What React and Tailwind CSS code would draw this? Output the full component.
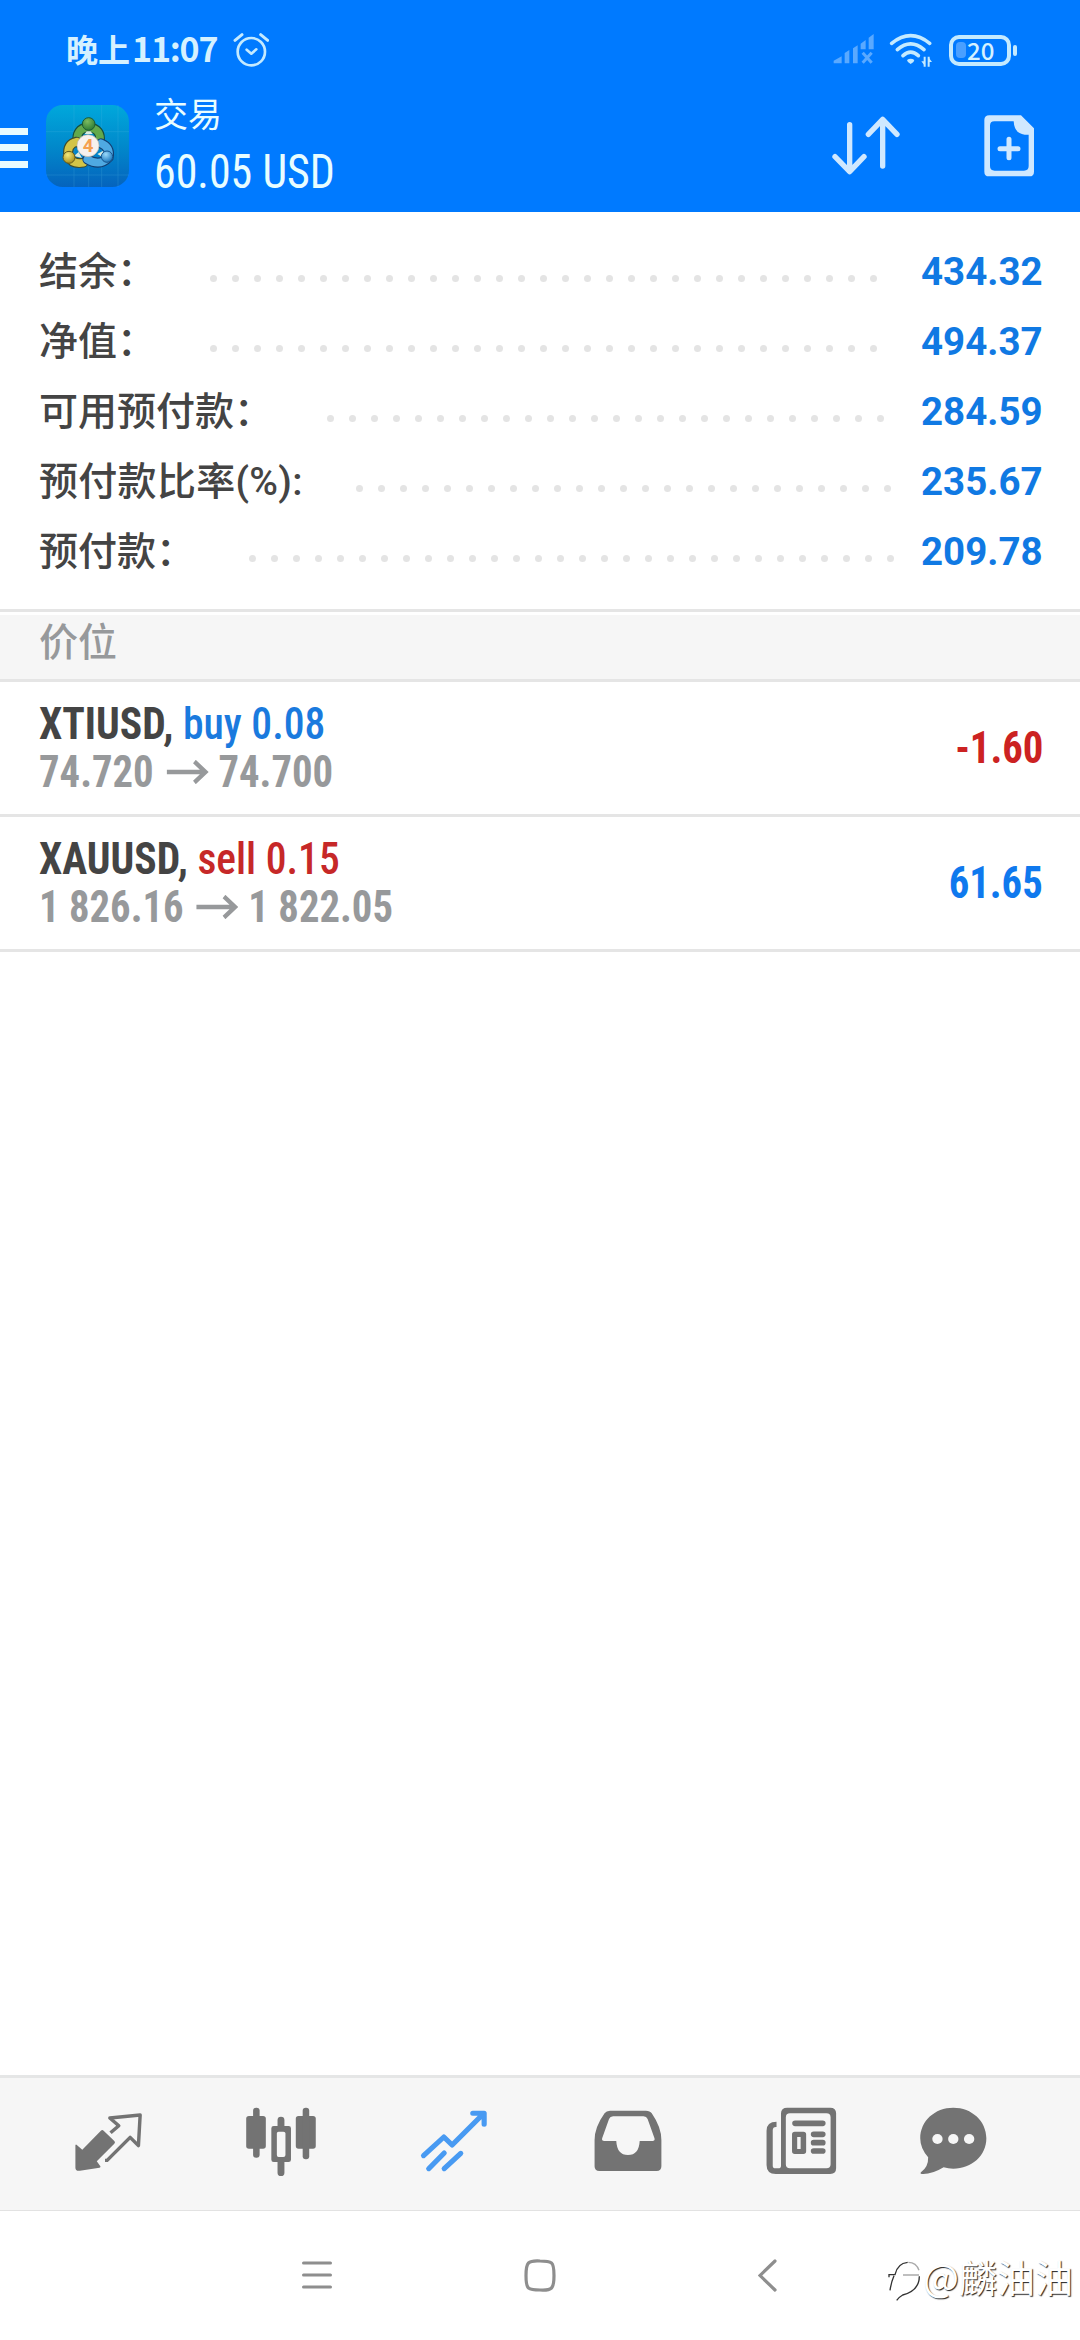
import React from "react";

const account = [
  { label: "结余：", value: "434.32" },
  { label: "净值：", value: "494.37" },
  { label: "可用预付款：", value: "284.59" },
  { label: "预付款比率(%):", value: "235.67", spacing: "tracking-[0.3px]" },
  { label: "预付款：", value: "209.78" },
];

const positions = [
  { symbol: "XTIUSD", side: "buy", volume: "0.08", open: "74.720", current: "74.700", profit: "-1.60" },
  { symbol: "XAUUSD", side: "sell", volume: "0.15", open: "1 826.16", current: "1 822.05", profit: "61.65" },
];

const StatusBar = () => (
  <div className="flex h-[100px] items-center pl-[66px] pr-[63px] text-[#d5f1ff]">
    <div className="flex w-[151px] items-center whitespace-nowrap pb-[5px] font-['Noto_Sans_CJK_SC',sans-serif] leading-none">
      <span className="text-[32px] font-bold">晚上</span>
      <span className="ml-0.5 text-[34px] font-bold tracking-[-1.2px]">11:07</span>
    </div>
    {/* alarm */}
    <svg className="ml-[16px]" width="36" height="36" viewBox="698 97 108 108" fill="none" stroke="#c4eaff" strokeLinecap="round">
      <circle cx="753" cy="156" r="41" strokeWidth="8" />
      <path d="M739 150l14 12 15-13" strokeWidth="8" strokeLinejoin="round" />
      <path d="M704 122l21-17M802 122l-21-17" strokeWidth="9" />
    </svg>
    <div className="ml-auto flex items-center">
      {/* no signal */}
      <svg width="42" height="32" viewBox="160 100 126 96" fill="#5aa9ff">
        <path d="M162 188v-8l24-13v21zM195 188v-31l14-9v40zM220 188v-45l14-9v54zM243 146v-17l15-11v28zM267 146v-35l15-11v46z" />
        <path d="M249 156l27 30M276 156l-27 30" stroke="#5aa9ff" strokeWidth="9" />
      </svg>
      <svg className="ml-[14px] mt-0.5" width="44" height="36" viewBox="328 99 132 108" fill="none" stroke="#c4eaff" strokeWidth="11" strokeLinecap="round">
        <path d="M336 130Q393 84 450 130" />
        <path d="M353 149Q393 114 433 149" />
        <path d="M370 167Q393 146 416 167" />
        <path d="M382 180Q393 172 404 180Q404 186 393 192Q382 186 382 180z" fill="#c4eaff" stroke="none" />
        <path d="M435 170v30M447 200v-30" strokeWidth="6" strokeLinecap="butt" />
        <path d="M425 184h9v12zM457 186h-9v-12z" fill="#c4eaff" stroke="none" />
      </svg>
      <div className="ml-4 flex items-center">
        <div className="flex h-[31px] w-[62px] items-center rounded-[10px] border-4 border-[#c4eaff] pl-[3px]">
          <span className="h-4 w-[10px] rounded-sm bg-[#4aa0ff]" />
          <span className="ml-px pb-px font-['Noto_Sans_CJK_SC',sans-serif] text-[24px] font-medium leading-none">20</span>
        </div>
        <span className="ml-0.5 h-[11px] w-1 rounded-full bg-[#c4eaff]" />
      </div>
    </div>
  </div>
);

const AppLogo = () => (
  <svg className="ml-[18px]" width="83" height="82" viewBox="138 315 249 246">
    <defs>
      <linearGradient id="tile" x1="0" y1="0" x2="0" y2="1">
        <stop offset="0" stopColor="#00a8dc" />
        <stop offset="0.5" stopColor="#0189cb" />
        <stop offset="1" stopColor="#0563bd" />
      </linearGradient>
      <radialGradient id="green" cx="0.4" cy="0.3" r="0.7">
        <stop offset="0" stopColor="#7dbb60" />
        <stop offset="1" stopColor="#2d7d35" />
      </radialGradient>
      <radialGradient id="gold" cx="0.4" cy="0.3" r="0.7">
        <stop offset="0" stopColor="#f5ea7c" />
        <stop offset="1" stopColor="#a98f1c" />
      </radialGradient>
      <radialGradient id="sky" cx="0.4" cy="0.3" r="0.7">
        <stop offset="0" stopColor="#9ad9fb" />
        <stop offset="1" stopColor="#1b78bd" />
      </radialGradient>
    </defs>
    <rect x="138" y="315" width="249" height="246" rx="50" fill="url(#tile)" />
    <path d="M138 395h249M138 525h249M222 315v246M305 315v246M354 315v246M266 500v61" stroke="#59bce4" strokeWidth="2" opacity="0.3" />
    <g fill="none" strokeLinecap="round">
      <path d="M233 428Q226 386 265 382Q306 386 299 428" stroke="#174d3b" strokeWidth="30" />
      <path d="M233 428Q226 386 265 382Q306 386 299 428" stroke="#62a94c" strokeWidth="23" />
      <path d="M230 425Q200 432 205 468Q216 494 250 488" stroke="#3f4c2e" strokeWidth="30" />
      <path d="M230 425Q200 432 205 468Q216 494 250 488" stroke="#d3c447" strokeWidth="23" />
      <path d="M303 430Q332 442 326 472Q300 500 262 478" stroke="#123f73" strokeWidth="30" />
      <path d="M303 430Q332 442 326 472Q300 500 262 478" stroke="#4fa9e2" strokeWidth="23" />
    </g>
    <path d="M254 402l6-8h12l6 8zM222 468l14-12 10 18zM292 462l18-10-2 20z" fill="#d9ebe2" />
    <circle cx="266" cy="372" r="19" fill="url(#green)" stroke="#1c5a34" strokeWidth="3" />
    <circle cx="207" cy="472" r="18" fill="url(#gold)" stroke="#645a1c" strokeWidth="3" />
    <circle cx="321" cy="470" r="17" fill="url(#sky)" stroke="#17558f" strokeWidth="3" />
    <circle cx="264" cy="437" r="33" fill="#f7f1ee" stroke="#bcb5a8" strokeWidth="2" />
    <text x="264" y="457" textAnchor="middle" fontFamily="Roboto, sans-serif" fontSize="56" fontWeight="700" fill="#f5a050">4</text>
  </svg>
);

const Header = () => (
  <header className="h-[212px] bg-[#007aff]">
    <StatusBar />
    <div className="flex h-[92px] items-center">
      <svg className="mt-[3px]" width="28" height="42" viewBox="0 0 28 42" fill="#e8fbff">
        <path d="M0 1h28v7H0zM0 17h28v7H0zM0 34h28v7H0z" />
      </svg>
      <AppLogo />
      <div className="ml-[25px] text-[#e8fdff]">
        <div className="mb-1.5 font-['Noto_Sans_CJK_SC',sans-serif] text-[34px] leading-[46px]">交易</div>
        <div className="w-[180px] origin-left scale-x-[0.915] whitespace-nowrap font-['Roboto_Condensed','Roboto',sans-serif] text-[48px] font-[450] leading-[60px]">60.05 USD</div>
      </div>
      <svg className="ml-auto" width="68" height="60" viewBox="153 348 204 180" fill="none" stroke="#cfe8ff" strokeWidth="16" strokeLinecap="round" strokeLinejoin="round">
        <path d="M206 374v140M162 470l44 45 43-45M305 498V358M262 403l43-45 43 45" />
      </svg>
      <svg className="ml-[84px] mr-[46px]" width="50" height="62" viewBox="609 345 150 186">
        <path fillRule="evenodd" fill="#cfe8ff" d="M625 346h95l39 39v130q0 14-14 14H624q-14 0-14-14V360q0-14 15-14zM640 364q-13 0-13 13v121q0 14 14 14h88q14 0 14-14v-94h-12q-31-3-33-40z" />
        <path d="M684 418v55M657 446h54" stroke="#cfe8ff" strokeWidth="15" strokeLinecap="round" />
      </svg>
    </div>
  </header>
);

// Dots wrap as whole 22px cells, the second line is cut off
const DotLeader = () => (
  <div className="ml-[46px] mt-[13px] flex h-[7px] flex-1 flex-wrap overflow-hidden">
    {Array.from({ length: 40 }, (_, i) => (
      <span key={i} className="flex h-[7px] w-[22px] justify-center">
        <i className="h-[7px] w-[7px] rounded-full bg-[#e4e4e4]" />
      </span>
    ))}
  </div>
);

const Summary = () => (
  <section className="h-[397px] pl-[39px] pr-[39px] pt-[25px]">
    {account.map((row) => (
      <div key={row.label} className="flex h-[70px] items-center">
        <span className={`whitespace-nowrap font-['Roboto','Noto_Sans_CJK_SC',sans-serif] text-[39px] font-medium leading-none text-[#444] ${row.spacing || ""}`}>
          {row.label}
        </span>
        <DotLeader />
        <span className="ml-[17px] w-[120px] text-right font-['Roboto',sans-serif] text-[38.5px] font-bold leading-none text-[#1079e3]">
          {row.value}
        </span>
      </div>
    ))}
  </section>
);

const Position = ({ p }) => (
  <li className="flex h-[135px] items-center justify-between border-b-[3px] border-[#e5e5e5] pl-[39px] pr-[37px] font-['Roboto_Condensed','Roboto',sans-serif] text-[44px] leading-[48px]">
    <div className="whitespace-nowrap">
      <div className="origin-left scale-x-[0.945]">
        <span className="font-bold text-[#444]">{p.symbol},</span>{" "}
        <span className={p.side === "buy" ? "font-medium text-[#1a7ade]" : "font-medium text-[#c62828]"}>
          {p.side} {p.volume}
        </span>
      </div>
      <div className="flex origin-left scale-x-[0.925] items-center font-bold text-[#97999b]">
        {p.open}
        <svg className="ml-[14px] mr-[10px]" width="46" height="24" viewBox="0 0 46 24" fill="none" stroke="currentColor" strokeWidth="4.500">
          <path d="M0 12h43M30 1.500l12 10.500-12 10.500" />
        </svg>
        {p.current}
      </div>
    </div>
    <span className={p.side === "buy" ? "origin-right scale-x-[0.925] font-bold text-[#cc2222]" : "origin-right scale-x-[0.925] font-bold text-[#0f79ee]"}>
      {p.profit}
    </span>
  </li>
);

const TabBar = () => (
  <nav className="flex h-[135px] items-center border-t-[3px] border-[#e5e6e6] bg-[#f6f6f6] pl-[68px] text-[#737373]">
    {/* quotes */}
    <svg width="80" height="80" viewBox="197.500 132 232.300 240" preserveAspectRatio="none" fill="none" stroke="currentColor">
      <path d="M293 212q4-4 8 0l31 31q4 4 0 8l-51 53 10 14q3 4-2 5l-57 9q-13 2-13-9v-67q1-4 4-1l16 14z" fill="currentColor" stroke="none" />
      <path d="M305 301h6l67-69 24 25 5-92-88 9 26 23-24 21" strokeWidth="10" strokeLinejoin="round" />
    </svg>
    {/* charts */}
    <svg className="ml-[93px]" width="80" height="80" viewBox="699.900 132 232.300 240" preserveAspectRatio="none" fill="currentColor">
      <rect x="715" y="168" width="57" height="98" rx="8" />
      <rect x="735" y="143" width="19" height="150" rx="9" />
      <rect x="859" y="168" width="58" height="98" rx="8" />
      <rect x="879" y="143" width="19" height="155" rx="9" />
      <path d="M806 201v-21q0-10 10-10t10 10v21zM806 300v38q0 10 10 10t10-10v-38z" />
      <path fillRule="evenodd" d="M795 198h43q7 0 7 7v94q0 7-7 7h-43q-7 0-7-7v-94q0-7 7-7zM809 215q-5 0-5 5v65q0 6 5 6h14q6 0 6-6v-65q0-5-6-5z" />
    </svg>
    {/* trade */}
    <svg className="ml-[93px]" width="80" height="80" viewBox="1202.300 132 232.300 240" preserveAspectRatio="none" fill="none" stroke="#489af2" strokeWidth="15" strokeLinecap="round" strokeLinejoin="round">
      <path d="M1230 287l59-56 24 24 90-93M1373 160h33v33M1245 326l45-47M1290 326l48-46" />
    </svg>
    {/* history */}
    <svg className="ml-[93px]" width="80" height="80" viewBox="135 132 232.300 240" preserveAspectRatio="none" fill="currentColor">
      <path fillRule="evenodd" d="M202 152h104q12 0 17 8 28 42 28 80v79q0 14-14 14H171q-14 0-14-14v-79q0-38 29-80 5-8 16-8zM211 169q-9 0-12 8l-20 58q-2 8 6 8h35q2 42 34 42t34-42h37q8 0 6-8l-20-58q-3-8-12-8z" />
    </svg>
    {/* news */}
    <svg className="ml-[93px]" width="80" height="80" viewBox="637 132 232.300 240" preserveAspectRatio="none" fill="currentColor">
      <path fillRule="evenodd" d="M716 143h125q17 0 17 17v165q0 17-17 17H683q-27 0-27-27V212q0-27 29-27v16q-11-1-11 10v106q0 8 8 8h8q8 0 8-8V160q0-17 18-17zM724 160q-12 0-12 12v141q0 12 12 12h106q12 0 12-12V172q0-12-12-12z" />
      <path fillRule="evenodd" d="M738 215h25q8 0 8 8v51q0 8-8 8h-25q-8 0-8-8v-51q0-8 8-8zM745 231v36h10v-36z" />
      <path d="M739 190h80M793 223h26M793 248h26M793 273h26" stroke="currentColor" strokeWidth="17" strokeLinecap="round" />
    </svg>
    {/* messages */}
    <svg className="ml-[73px]" width="80" height="80" viewBox="1082 132 232.300 240" preserveAspectRatio="none" fill="currentColor">
      <path d="M1199 143c54 0 96 40 96 92s-42 91-96 91q-15 0-28-4-35 22-64 20-6-2-2-5 22-16 21-45-23-27-23-57c0-52 42-92 96-92z" />
      <g fill="#f6f6f6">
        <circle cx="1153" cy="237" r="15" />
        <circle cx="1199" cy="237" r="15" />
        <circle cx="1245" cy="237" r="15" />
      </g>
    </svg>
  </nav>
);

const SystemNav = () => (
  <div className="relative flex h-[130px] items-center border-t border-[#e2e2e2] pl-[302px]">
    <svg width="30" height="34" viewBox="0 0 30 34" stroke="#8e8e8e" strokeWidth="3" strokeLinecap="round">
      <path d="M1.500 4h27M1.500 16h27M1.500 28h27" />
    </svg>
    <svg className="ml-[192px]" width="32" height="34" viewBox="0 0 32 34" fill="none" stroke="#8e8e8e" strokeWidth="3.200">
      <path d="M16 2q9 0 11.500 2T30 16.500q0 10-2.500 12.500T16 31q-9 0-11.500-2T2 16.500Q2 6.500 4.500 4T16 2z" />
    </svg>
    <svg className="ml-[202px]" width="19" height="34" viewBox="0 0 19 34" fill="none" stroke="#8e8e8e" strokeWidth="3.200" strokeLinecap="round">
      <path d="M17 2L2 16.500 17 31" />
    </svg>
    {/* watermark */}
    <div className="absolute right-[7px] top-[37px] flex items-center">
      <svg className="mr-px mt-3" width="34" height="44" viewBox="442 126 102 132" fill="none" stroke="#333" strokeWidth="4">
        <path d="M445 178v-8h18q7-34 38-37M448 217q4-26 12-44M536 175q0 43-50 56-9 5-18 16" />
        <path d="M487 171h48M503 133q24 0 32 24" stroke="#aaa" />
      </svg>
      <span className="whitespace-nowrap font-['Noto_Sans_CJK_SC',sans-serif] text-[38px] leading-none text-white [text-shadow:1px_1px_1px_#222]">@麟油油</span>
    </div>
  </div>
);

const App = () => {
  return (
    <div className="flex h-[2340px] w-[1080px] flex-col overflow-hidden bg-white">
      <Header />
      <Summary />
      <div className="flex h-[73px] items-center border-y-[3px] border-[#e5e5e5] bg-[#f6f6f6] px-[39px] pb-[12px] font-['Noto_Sans_CJK_SC',sans-serif] text-[39px] font-medium leading-none text-[#97999b] shadow-[inset_0_3px_0_white]">
        价位
      </div>
      <ul>
        {positions.map((p) => (
          <Position key={p.symbol} p={p} />
        ))}
      </ul>
      <div className="mt-auto">
        <TabBar />
        <SystemNav />
      </div>
    </div>
  );
};

export default App;
